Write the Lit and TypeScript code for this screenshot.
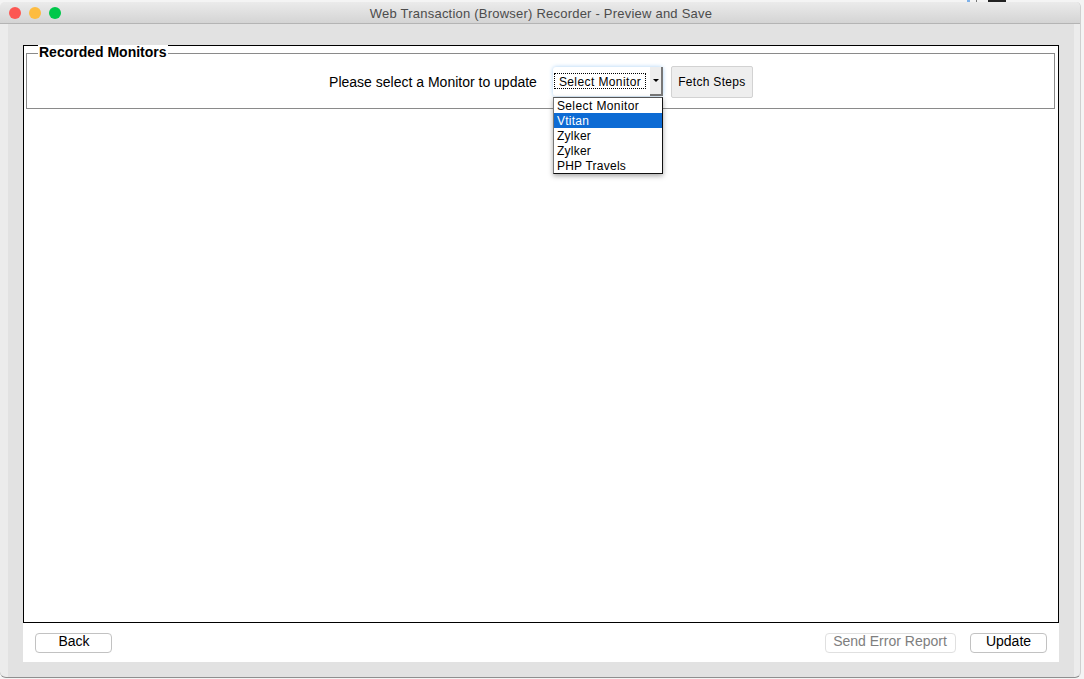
import { LitElement, html, css } from "lit";
import { customElement } from "lit/decorators.js";

@customElement("app-root")
export class AppRoot extends LitElement {
  static styles = css`
    :host { display: block; width: 1084px; height: 679px; background: #f4f4f4; font-family: "Liberation Sans", Arial, sans-serif; color: #000; overflow: hidden; position: relative; }
    .bit { position: absolute; top: 0; height: 3px; }
    .bit.blue { left: 967px; width: 3px; background: #7fb2ea; }
    .bit.dot { left: 976px; width: 1px; height: 2px; background: #777; }
    .bit.dark { left: 988px; width: 18px; background: #222; }
    .window { box-sizing: border-box; width: 1081px; height: 676px; margin-top: 2px; background: #ececec; border-radius: 5px 5px 6px 6px; border-bottom: 1px solid #8f8f8f; border-right: 1px solid #cfcfcf; display: flex; flex-direction: column; position: relative; }
    .title { box-sizing: border-box; height: 22px; flex: none; background: linear-gradient(#ebebeb, #d4d4d4); border-bottom: 1px solid #b4b4b4; border-radius: 5px 5px 0 0; display: flex; align-items: center; justify-content: center; font-size: 13px; color: #4c4c4c; letter-spacing: 0.22px; position: relative; padding: 2px 0 0 2px; }
    .lights { position: absolute; left: 9px; top: 5px; display: flex; gap: 8px; }
    .light { width: 12px; height: 12px; border-radius: 50%; }
    .r { background: #fc5753; } .y { background: #fdbc40; } .g { background: #00c74a; }
    .body { flex: 1; margin: 0 6px 0 8px; background: #e2e2e2; padding: 21px 15px 15px 15px; display: flex; flex-direction: column; min-height: 0; }
    .sheet { flex: 1; background: #fff; display: flex; flex-direction: column; min-height: 0; }
    .panel { flex: 1; border: 1px solid #000; display: flex; flex-direction: column; padding: 7px 3px 0 2px; min-height: 0; }
    .group { height: 56px; box-sizing: border-box; border: 1px solid #8a8a8a; position: relative; display: flex; align-items: flex-start; justify-content: center; flex: none; }
    .legend { position: absolute; left: 11px; top: -9px; background: #fff; padding: 0 1px; font-size: 14px; font-weight: bold; line-height: 14px; }
    .row { display: flex; align-items: flex-start; padding: 13px 0 0 1px; }
    .label { font-size: 14px; line-height: 16px; margin-top: 7px; margin-right: 16px; white-space: nowrap; }
    .select { width: 110px; height: 29px; box-sizing: border-box; background: #fff; border-radius: 3px; box-shadow: 0 0 4px #a9d0f5; display: flex; position: relative; font-size: 12px; }
    .sel-text { box-sizing: border-box; flex: 1; margin: 6px 4px 7px 1px; padding: 2px 0 0 4px; border: 1px dotted #000; display: flex; align-items: center; white-space: nowrap; letter-spacing: 0.4px; }
    .sel-arrow { width: 13px; box-sizing: border-box; background: #eeeeee; border-right: 2px solid #777; border-bottom: 2px solid #777; display: flex; align-items: center; justify-content: center; padding-left: 1px; }
    .tri { width: 0; height: 0; border-left: 3px solid transparent; border-right: 3px solid transparent; border-top: 3px solid #000; }
    .fetch { width: 82px; height: 32px; box-sizing: border-box; margin: -1px 0 0 8px; background: #eeeeee; border: 1px solid #d2d2d2; border-radius: 2px; font-size: 12px; display: flex; align-items: center; justify-content: center; letter-spacing: 0.3px; }
    .menu { position: absolute; left: 0; top: 30px; width: 110px; box-sizing: border-box; background: #fff; border: 1px solid #111; border-top-color: #555; border-left-color: #777; box-shadow: 0 2px 5px rgba(0,0,0,.35); z-index: 2; }
    .item { height: 15px; line-height: 17px; padding-left: 3px; font-size: 12px; letter-spacing: 0.25px; }
    .item.wide { letter-spacing: 0.4px; }
    .item.sel { background: #0d6bd4; color: #fff; }
    .footer { height: 39px; flex: none; display: flex; justify-content: space-between; align-items: flex-start; padding: 10px 12px 0 12px; box-sizing: border-box; }
    .btn { height: 20px; box-sizing: border-box; border: 1px solid #c2c2c2; border-radius: 4px; background: #fff; font-size: 14px; line-height: 15px; display: flex; justify-content: center; }
    .back { width: 77px; padding-left: 1px; }
    .right { display: flex; gap: 14px; }
    .err { width: 131px; color: #7e7e7e; border-color: #e0e0e0; padding-right: 1px; }
    .upd { width: 77px; }
  `;

  render() {
    return html`
      <div class="bit blue"></div><div class="bit dot"></div><div class="bit dark"></div>
      <div class="window">
        <div class="title">
          <div class="lights"><div class="light r"></div><div class="light y"></div><div class="light g"></div></div>
          Web Transaction (Browser) Recorder - Preview and Save
        </div>
        <div class="body">
          <div class="sheet">
            <div class="panel">
              <div class="group">
                <div class="legend">Recorded Monitors</div>
                <div class="row">
                  <div class="label">Please select a Monitor to update</div>
                  <div class="select">
                    <div class="sel-text">Select Monitor</div>
                    <div class="sel-arrow"><div class="tri"></div></div>
                    <div class="menu">
                      <div class="item wide">Select Monitor</div>
                      <div class="item sel">Vtitan</div>
                      <div class="item">Zylker</div>
                      <div class="item">Zylker</div>
                      <div class="item">PHP Travels</div>
                    </div>
                  </div>
                  <div class="fetch">Fetch Steps</div>
                </div>
              </div>
            </div>
            <div class="footer">
              <div class="btn back">Back</div>
              <div class="right">
                <div class="btn err">Send Error Report</div>
                <div class="btn upd">Update</div>
              </div>
            </div>
          </div>
        </div>
      </div>
    `;
  }
}
